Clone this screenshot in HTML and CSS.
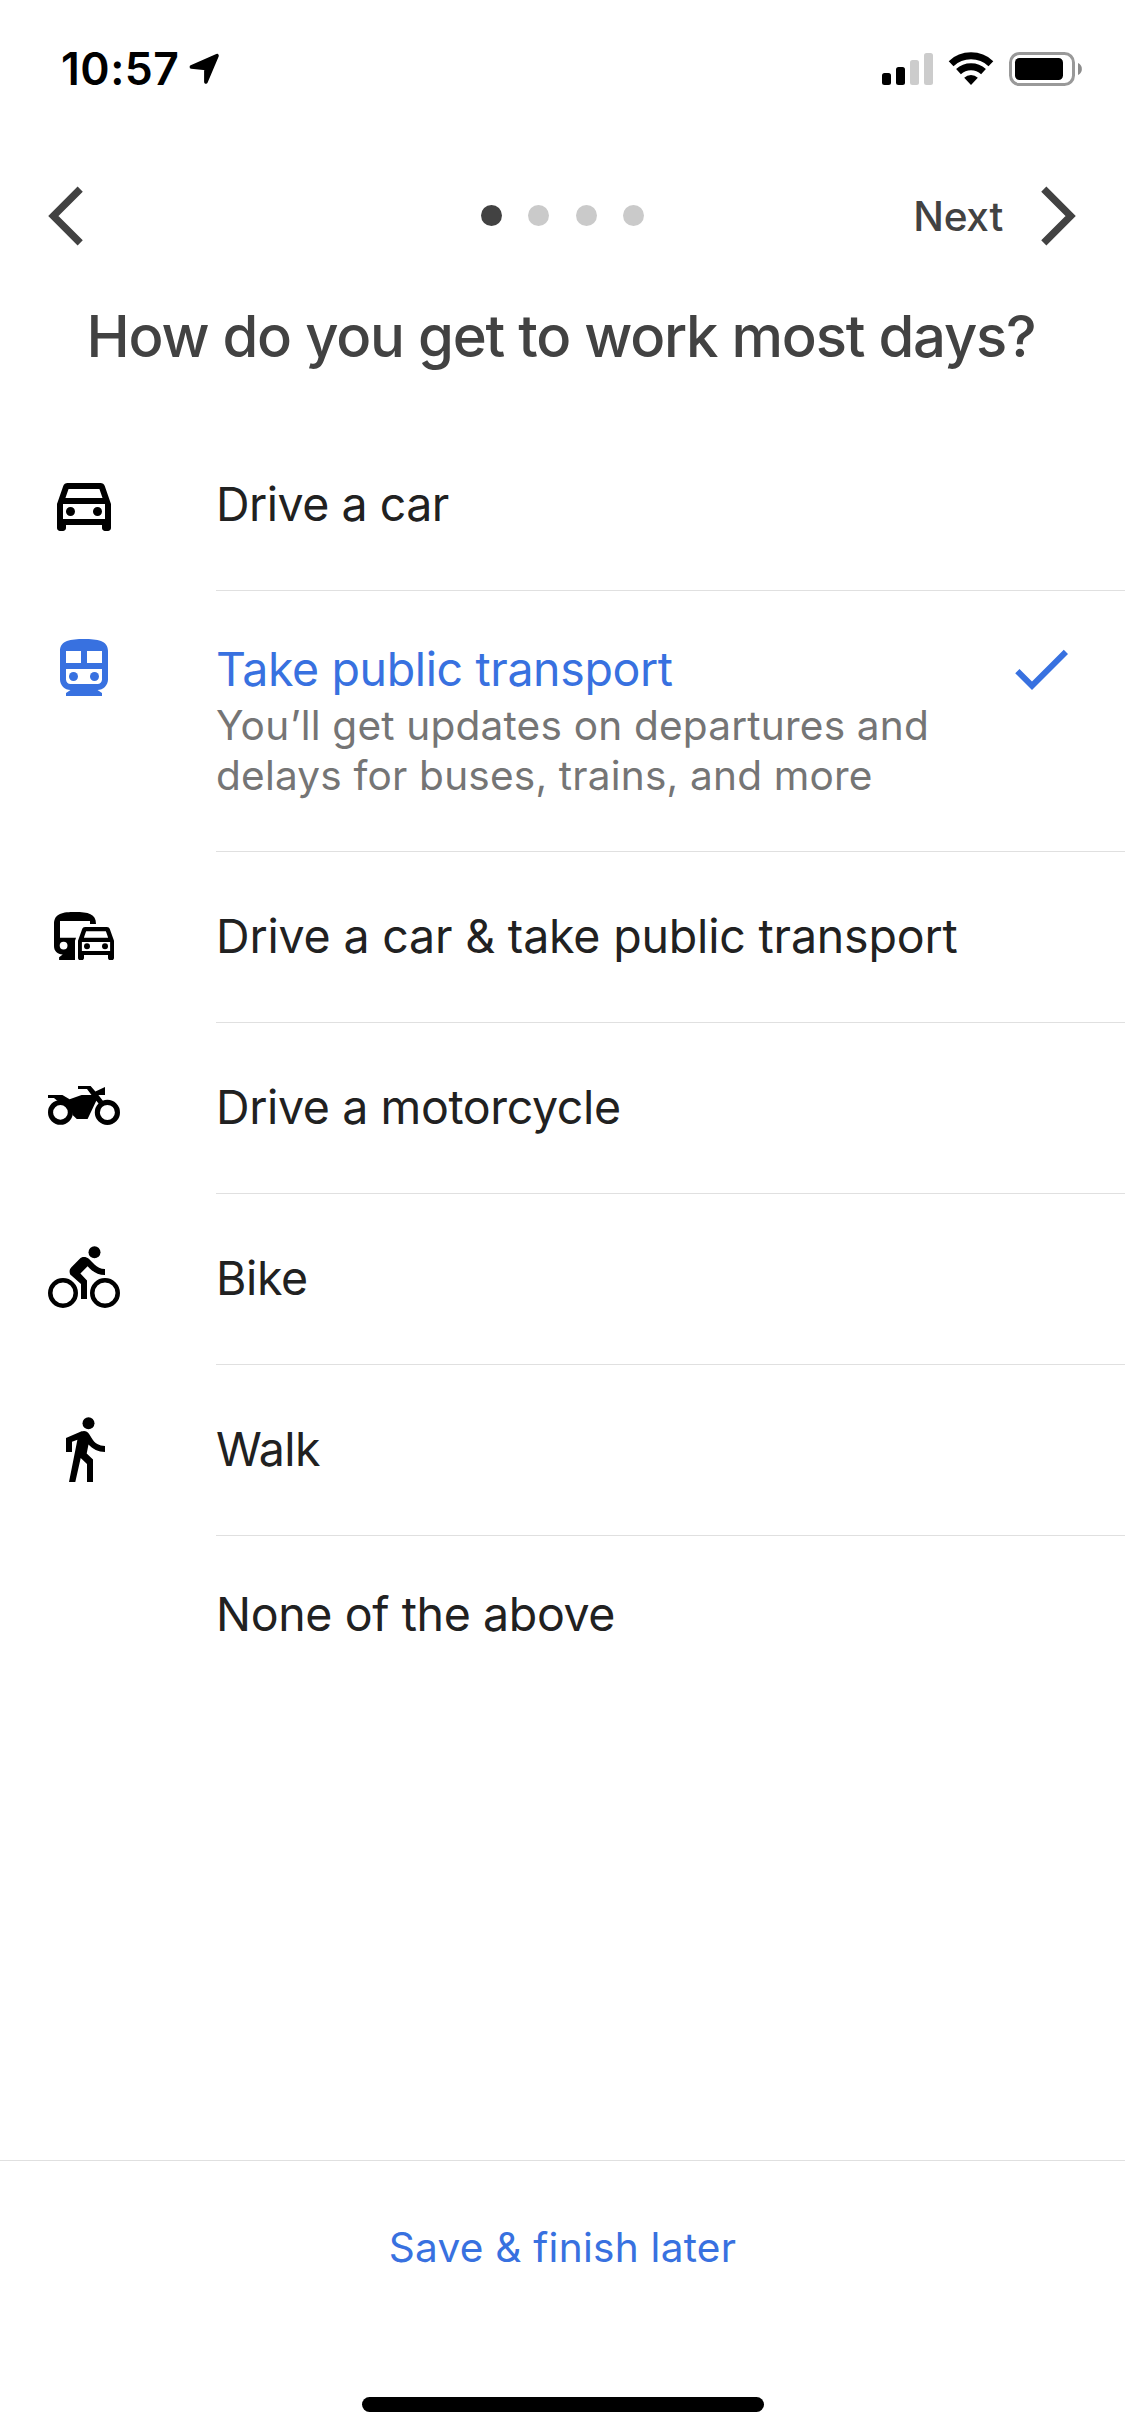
FILE: index.html
```
<!DOCTYPE html>
<html lang="en">
<head>
<meta charset="utf-8">
<title>Commute setup</title>
<link rel="stylesheet" href="styles.css">
</head>
<body>
<div class="screen">
  <div class="status">
    <div class="status-left">
      <span class="time">10:57</span>
      <svg width="31" height="32" viewBox="0 0 31 32"><path d="M28 2.700L16.900 29V15.500L2.400 14Z" fill="#000" stroke="#000" stroke-width="3.600" stroke-linejoin="round"/></svg>
    </div>
    <div class="status-right">
      <svg width="51" height="34" viewBox="0 0 51 34">
        <rect x="0" y="21" width="9" height="12" rx="2.5"/>
        <rect x="14" y="15" width="9" height="18" rx="2.5"/>
        <rect x="28" y="8" width="9" height="25" rx="2.5" fill="#ccc"/>
        <rect x="42" y="1" width="9" height="32" rx="2.5" fill="#ccc"/>
      </svg>
      <svg class="wifi" width="46" height="34" viewBox="0 0 46 34">
        <g fill="none" stroke="#000" stroke-width="7">
          <path d="M3.1 11.7A29.2 29.2 0 0 1 42.9 11.7"/>
          <path d="M10.5 19.6A18.3 18.3 0 0 1 35.5 19.6"/>
        </g>
        <path d="M23 33L16.2 25.7A10 10 0 0 1 29.8 25.7Z"/>
      </svg>
      <svg width="74" height="34" viewBox="0 0 74 34">
        <rect x="1.5" y="1.5" width="63" height="31" rx="9" fill="none" stroke="#999" stroke-width="3"/>
        <rect x="6" y="6" width="48" height="22" rx="4.5"/>
        <path d="M69 11a6.6 6.6 0 0 1 0 12z" fill="#8c8c8c"/>
      </svg>
    </div>
  </div>

  <div class="nav">
    <svg width="36" height="60" viewBox="0 0 36 60"><path class="chevron" d="M32.2 3.2L5.4 30L32.2 56.8"/></svg>
    <div class="dots"><i class="dot active"></i><i class="dot"></i><i class="dot"></i><i class="dot"></i></div>
    <div class="next">
      <span>Next</span>
      <svg width="36" height="60" viewBox="0 0 36 60"><path class="chevron" d="M2.8 3.2L29.6 30L2.8 56.8"/></svg>
    </div>
  </div>

  <h1 class="title">How do you get to work most days?</h1>

  <div class="list">
    <div class="row">
      <svg class="icon" viewBox="0 0 24 24"><path d="M18.92 5.01C18.72 4.42 18.16 4 17.5 4h-11c-.66 0-1.21.42-1.42 1.01L3 11v8c0 .55.45 1 1 1h1c.55 0 1-.45 1-1v-1h12v1c0 .55.45 1 1 1h1c.55 0 1-.45 1-1v-8l-2.08-5.99zM6.85 6h10.29l1.04 3H5.81l1.04-3zM19 16H5v-5h14v5z"/><circle cx="7.5" cy="13.5" r="1.5"/><circle cx="16.5" cy="13.5" r="1.5"/></svg>
      <div class="body"><div class="label car">Drive a car</div></div>
    </div>
    <div class="row selected">
      <svg class="icon" viewBox="0 0 24 24"><path fill-rule="evenodd" d="M12 3c-4.42 0-8 .5-8 4v9.5C4 18.43 5.57 20 7.5 20L6 21v1h12v-1l-1.5-1c1.93 0 3.5-1.57 3.5-3.5V7c0-3.5-3.58-4-8-4zM6 7h5v4H6zM13 7h5v4h-5zM6 13h12v3.5c0 .83-.67 1.5-1.5 1.5h-9c-.83 0-1.5-.67-1.5-1.5z"/><circle cx="8.5" cy="15.5" r="1.5"/><circle cx="15.5" cy="15.5" r="1.5"/></svg>
      <div class="body">
        <div class="text">
          <div class="label">Take public transport</div>
          <div class="detail">You’ll get updates on departures and<br>delays for buses, trains, and more</div>
        </div>
        <svg class="check" viewBox="0 0 24 24"><path d="M9 16.17L4.83 12l-1.42 1.41L9 19 21 7l-1.41-1.41z"/></svg>
      </div>
    </div>
    <div class="row">
      <svg class="icon" viewBox="0 0 24 24"><path fill-rule="evenodd" d="M9 3C5 3 2 3.4 2 7v7.3c0 1.7 1.1 2.7 2.9 2.9L3.7 18.1V19H9v-6.4l.35-1H4V6h10v1h2c0-3.4-2.6-4-7-4zM5.2 12.9a1.3 1.3 0 1 0 0 2.6 1.3 1.3 0 0 0 0-2.6zM20.6 8.7c-.14-.42-.5-.7-.95-.7h-7.3c-.45 0-.81.28-.95.7L10 12.6v5.7c0 .4.3.7.7.7h.6c.4 0 .7-.3.7-.7v-1h8v1c0 .4.3.7.7.7h.6c.4 0 .7-.3.7-.7v-5.7zM12.7 9.4h6.6l.75 2.2h-8.1zM20.7 16h-9.4v-3h9.4z"/><circle cx="13" cy="14.45" r="1"/><circle cx="19" cy="14.45" r="1"/></svg>
      <div class="body"><div class="label both">Drive a car &amp; take public transport</div></div>
    </div>
    <div class="row">
      <svg class="icon" viewBox="0 0 24 24"><g fill="none" stroke="#000" stroke-width="1.7"><circle cx="4.15" cy="12.8" r="3.3"/><circle cx="19.8" cy="12.8" r="3.35"/></g><path d="M10 4h4.2l1.6 1.8L19 4.3V7h-2.2l1.5 1.9-1.3 1.1-.9-1.1L13.2 15H9.6l-1.4-1.3C8 10.7 6 9.2 3.1 8.9L2 8H0V7h4.8l2.4 1.4L11.200 7h3.3l-1.5-2H10z"/></svg>
      <div class="body"><div class="label">Drive a motorcycle</div></div>
    </div>
    <div class="row">
      <svg class="icon" viewBox="0 0 24 24"><g fill="none" stroke="#000" stroke-width="1.5"><circle cx="5" cy="16" r="4.25"/><circle cx="19" cy="16" r="4.25"/></g><circle cx="15.5" cy="2.4" r="2"/><path d="M10.8 9.5l2.4-2.4.8.8c1.3 1.3 3 2.1 5 2.1V8c-1.5 0-2.6-.6-3.5-1.5l-1.9-1.9c-.5-.4-1-.6-1.6-.6s-1.1.2-1.4.6L7.8 7.4c-.4.4-.6.9-.6 1.4 0 .6.2 1.1.6 1.4L11 13v5h2v-6.2l-2.2-2.3z"/></svg>
      <div class="body"><div class="label">Bike</div></div>
    </div>
    <div class="row">
      <svg class="icon" viewBox="0 0 24 24"><circle cx="13.5" cy="2.4" r="2"/><path d="M9.8 7.9L7 22h2.1l1.8-8 2.1 2v6h2v-7.5l-2.1-2 .6-3C14.8 11 16.8 12 19 12v-2c-1.9 0-3.5-1-4.3-2.4l-1-1.6c-.4-.6-1-1-1.7-1-.3 0-.5.1-.8.1L6 7.3V12h2V8.6z"/></svg>
      <div class="body"><div class="label walk">Walk</div></div>
    </div>
    <div class="row last">
      <div class="body"><div class="label">None of the above</div></div>
    </div>
  </div>

  <div class="footer">
    <a class="save">Save &amp; finish later</a>
    <div class="home"></div>
  </div>
</div>
</body>
</html>
```
FILE: styles.css
```
* { box-sizing: border-box; }
body {
  margin: 0;
  background: #fff;
  font-family: Inter, "Liberation Sans", sans-serif;
}
svg { display: block; flex: none; }
.screen {
  width: 1125px;
  height: 2436px;
  display: flex;
  flex-direction: column;
  overflow: hidden;
}
.status {
  height: 138px;
  padding: 39px 42px 0 61px;
  display: flex;
  justify-content: space-between;
  align-items: flex-start;
}
.status-left, .status-right {
  display: flex;
  align-items: center;
  height: 60px;
}
.status-left { gap: 9px; }
.status-right { gap: 15px; }
.time {
  font-size: 44.5px;
  line-height: 60px;
  font-weight: 600;
  letter-spacing: .5px;
  color: #000;
}
.nav {
  height: 156px;
  padding: 0 48px;
  display: grid;
  grid-template-columns: 1fr auto 1fr;
  align-items: center;
}
.chevron { fill: none; stroke: #424242; stroke-width: 7.3; }
.dots { display: flex; gap: 26.2px; padding-bottom: 1px; }
.dot {
  width: 21px;
  height: 21px;
  border-radius: 50%;
  background: #cacaca;
}
.dot.active { background: #424242; }
.next {
  display: flex;
  justify-content: flex-end;
  align-items: center;
  gap: 38px;
  font-size: 40.6px;
  font-weight: 500;
  letter-spacing: -.25px;
  color: #424242;
}
.title {
  margin: 0;
  height: 126px;
  padding: 2px 3px 0 0;
  font-size: 58px;
  line-height: 80px;
  font-weight: 500;
  letter-spacing: -1.22px;
  text-align: center;
  white-space: nowrap;
  color: #424242;
}
.row {
  display: flex;
  align-items: flex-start;
  height: 171px;
}
.row.selected { height: 261px; }
.icon {
  width: 72px;
  height: 72px;
  margin: 51px 96px 0 48px;
}
.selected .icon { margin-top: 39px; }
.body {
  flex: 1;
  height: 100%;
  display: flex;
  justify-content: space-between;
  align-items: flex-start;
  padding: 56px 48px 0 0;
  border-bottom: 1px solid #e0e0e0;
}
.selected .body { padding-top: 50px; }
.last .body {
  padding-top: 50px;
  margin-left: 216px;
  border-bottom: 0;
}
.label {
  font-size: 46.5px;
  line-height: 56px;
  letter-spacing: -.38px;
  white-space: nowrap;
  color: #212121;
}
.label.car { letter-spacing: -.5px; }
.label.both { letter-spacing: -.18px; }
.label.walk { letter-spacing: -.6px; }
.selected .label { color: #3871e0; }
.selected .icon, .check { fill: #3871e0; }
.detail {
  margin-top: 4px;
  font-size: 40.6px;
  line-height: 50px;
  letter-spacing: .19px;
  white-space: nowrap;
  color: #757575;
}
.check {
  width: 72px;
  height: 72px;
  margin-top: -8px;
}
.footer {
  margin-top: auto;
  height: 276px;
  padding-top: 57px;
  border-top: 1px solid #e0e0e0;
  display: flex;
  flex-direction: column;
  align-items: center;
}
.save {
  font-size: 40.6px;
  line-height: 60px;
  letter-spacing: .25px;
  color: #3871e0;
}
.home {
  width: 402px;
  height: 15px;
  margin-top: 119px;
  border-radius: 8px;
  background: #000;
}
```
